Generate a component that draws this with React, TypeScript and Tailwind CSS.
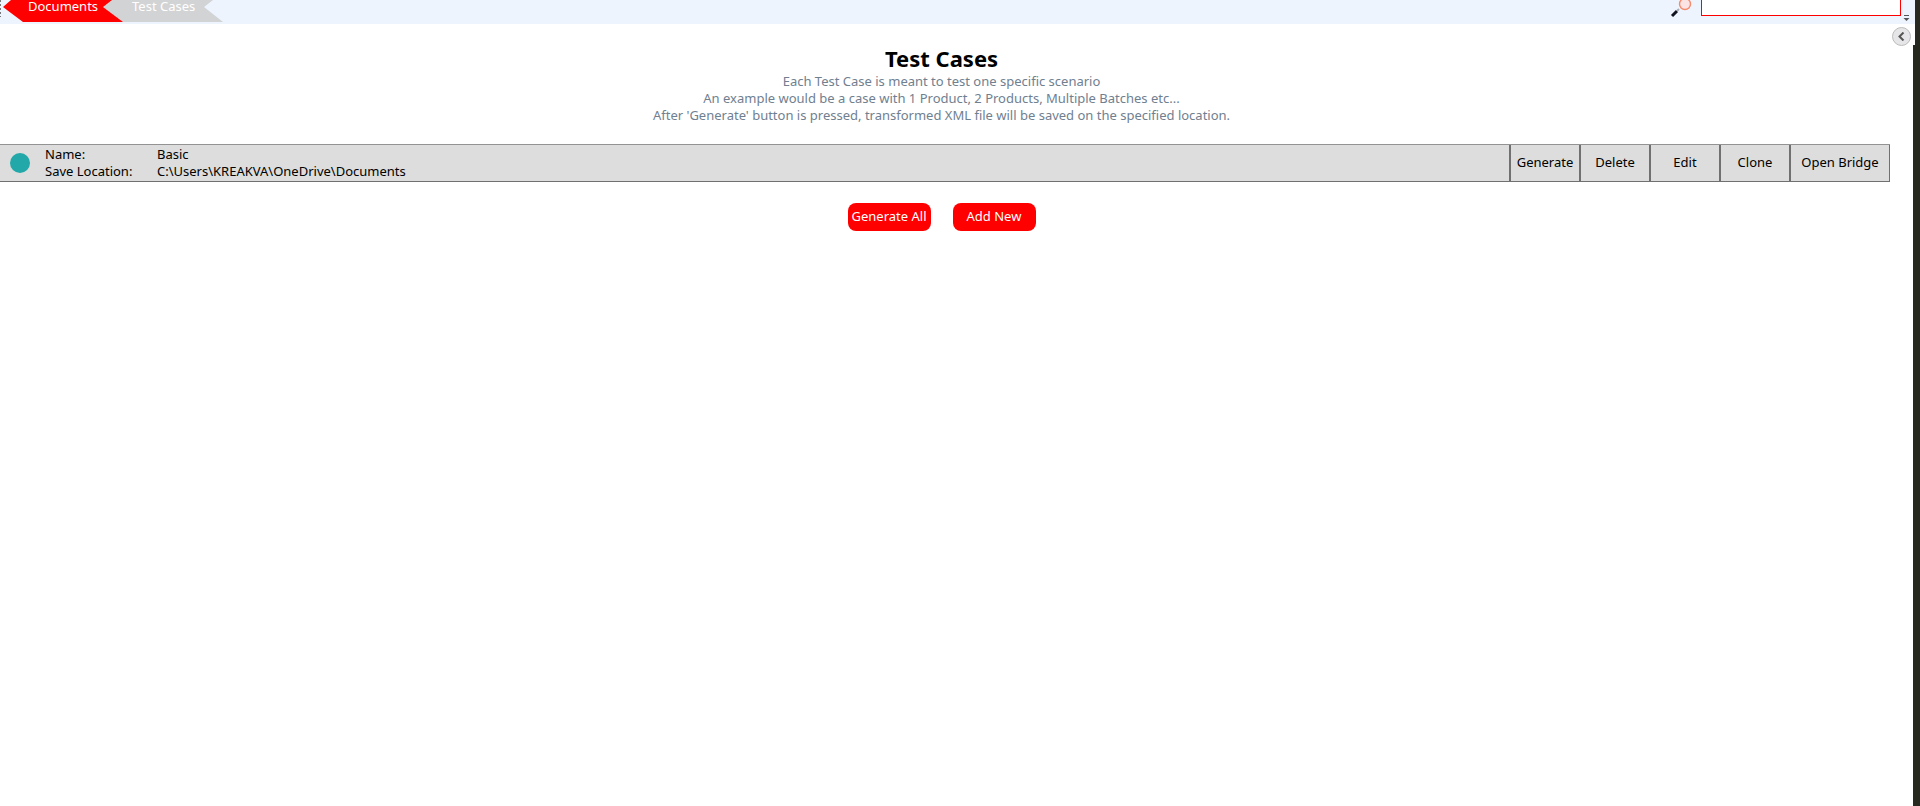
const actions = [
  { label: 'Generate', width: 'w-[70px]' },
  { label: 'Delete', width: 'w-[70px]' },
  { label: 'Edit', width: 'w-[70px]' },
  { label: 'Clone', width: 'w-[70px]' },
  { label: 'Open Bridge', width: 'w-[100px]' },
];

function Breadcrumbs() {
  return (
    <nav aria-label="Breadcrumb" className="relative flex h-[22px] w-[223px] text-white">
      <svg className="absolute inset-0" width="223" height="22" viewBox="0 0 223 22" aria-hidden="true">
        <path d="M111 0H213L204 7L223 22H122L103 7Z" fill="#d2d3d4" />
        <path d="M11 0H112L103 7L123 22H23L3 7Z" fill="#ff0000" />
        <path d="M0.5 0V17" stroke="#777" strokeDasharray="2 2" />
      </svg>
      <a href="#documents" className="relative -mt-[2px] ml-7 w-[104px] leading-[17px]">Documents</a>
      <a href="#test-cases" className="relative -mt-[2px] leading-[17px] whitespace-nowrap">Test Cases</a>
    </nav>
  );
}

function Header() {
  return (
    <header className="flex h-6 items-start justify-between bg-[#edf4fd]">
      <Breadcrumbs />
      <div className="flex items-start">
        <label htmlFor="search" aria-label="Search" className="mr-[9px]">
          <svg width="22" height="18" viewBox="0 0 22 18">
            <path d="M2 16L7 11" stroke="#10131f" strokeWidth="3" />
            <path d="M7 11L9 9" stroke="#a9adb5" strokeWidth="2" />
            <circle cx="15" cy="4" r="5.5" fill="#fde4e4" stroke="#f58a6c" strokeWidth="1.4" />
          </svg>
        </label>
        <input id="search" type="text" className="h-4 w-[200px] border border-t-0 border-[#ff0000] bg-white px-1 outline-none" />
        <button type="button" aria-label="Toolbar options" className="flex h-6 w-3 justify-center">
          <svg width="8" height="24" viewBox="0 0 8 24">
            <path d="M1 15.5H6" stroke="#555" />
            <path d="M0.5 18H6.5L3.5 21Z" fill="#555" />
          </svg>
        </button>
      </div>
    </header>
  );
}

function TestCaseRow() {
  return (
    <section className="-mr-[7px] mt-5 flex h-[38px] border-y border-t-[#939393] border-b-[#707070] bg-[#dcdddc]">
      <div className="flex grow items-center">
        <span className="ml-[10px] size-5 rounded-full bg-[#22a8a8]" />
        <dl className="ml-[15px] grid grid-cols-[112px_auto] pb-px leading-[17px] text-black">
          <dt>Name:</dt>
          <dd>Basic</dd>
          <dt>Save Location:</dt>
          <dd>C:\Users\KREAKVA\OneDrive\Documents</dd>
        </dl>
      </div>
      <div className="flex border-l border-[#707070]">
        {actions.map((a) => (
          <button
            key={a.label}
            type="button"
            className={`${a.width} border-r border-l border-[#707070] pb-px whitespace-nowrap text-black`}
          >
            {a.label}
          </button>
        ))}
      </div>
    </section>
  );
}

export default function App() {
  return (
    <div className="flex min-h-screen bg-white font-['Noto_Sans','Open_Sans',sans-serif] text-[13px]">
      <div className="min-w-0 grow">
        <Header />
        <main className="relative pr-[30px]">
          <button
            type="button"
            aria-label="Expand panel"
            className="absolute top-[3px] right-[2px] flex size-[19px] items-center justify-center rounded-full border border-[#bcbcbc] bg-[#e6e6e8]"
          >
            <svg width="9" height="9" viewBox="0 0 9 9" fill="none" stroke="#555" strokeWidth="2">
              <path d="M6.5 0.5L2.5 4.5L6.5 8.5" />
            </svg>
          </button>
          <div className="pt-5 text-center">
            <h1 className="text-[22px] leading-[29px] font-bold text-black">Test Cases</h1>
            <p className="leading-[17px] text-[#708090]">Each Test Case is meant to test one specific scenario</p>
            <p className="leading-[17px] text-[#708090]">An example would be a case with 1 Product, 2 Products, Multiple Batches etc...</p>
            <p className="leading-[17px] text-[#708090]">
              After 'Generate' button is pressed, transformed XML file will be saved on the specified location.
            </p>
          </div>
          <TestCaseRow />
          <div className="mt-[21px] flex justify-center gap-[22px] text-white">
            <button type="button" className="h-7 w-[83px] rounded-lg bg-[#ff0000] pb-px whitespace-nowrap">Generate All</button>
            <button type="button" className="h-7 w-[83px] rounded-lg bg-[#ff0000] pb-px whitespace-nowrap">Add New</button>
          </div>
        </main>
      </div>
      <aside className="flex w-[7px] shrink-0 flex-col items-end bg-white">
        <div className="h-6 w-full border-l-2 border-[#edf4fd] bg-[#272820]" />
        <div className="h-[21px] w-[5px] bg-[#272820]" />
        <div className="w-full grow bg-[#272820]" />
      </aside>
    </div>
  );
}
